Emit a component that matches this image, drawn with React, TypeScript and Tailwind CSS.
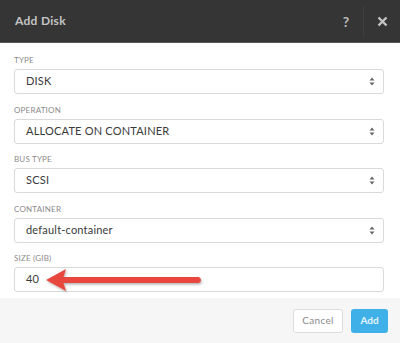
import React from 'react';

const Field: React.FC<{ label: string; value: string; select?: boolean }> = ({ label, value, select = true }) => (
  <div className="flex flex-col">
    <span className="text-[8px] leading-[10px] tracking-wide text-[#8a8a8a] uppercase mb-[4px]">{label}</span>
    <div className="h-[25px] border border-[#d9d9d9] rounded-[3px] bg-white flex items-center justify-between pl-[11px] pr-[8px]">
      <span className="text-[11px] text-[#3a3a3a] tracking-[0.2px]">{value}</span>
      {select && (
        <svg width="6" height="9" viewBox="0 0 6 9" className="text-[#666]">
          <path d="M3 0.5 L5.5 3.5 H0.5 Z" fill="currentColor" />
          <path d="M3 8.5 L5.5 5.5 H0.5 Z" fill="currentColor" />
        </svg>
      )}
    </div>
  </div>
);

const App: React.FC = () => {
  return (
    <div className="w-[400px] h-[343px] bg-white flex flex-col relative overflow-hidden" style={{ fontFamily: 'Lato, "Open Sans", "Liberation Sans", sans-serif' }}>
      {/* Header */}
      <div className="h-[43px] bg-[#353535] border-b border-[#555] flex items-center pl-[15px]">
        <span className="text-[12px] font-bold text-[#c4c4c4] tracking-[0.3px]">Add Disk</span>
        <div className="ml-auto flex items-center h-full">
          <span className="w-[34px] text-center text-[14px] font-bold text-[#bdbdbd]">?</span>
          <div className="w-px h-[30px] bg-[#3f3f3f]" />
          <div className="w-[36px] flex justify-center">
            <svg width="11" height="11" viewBox="0 0 11 11">
              <path d="M1.5 1.5 L9.5 9.5 M9.5 1.5 L1.5 9.5" stroke="#c4c4c4" strokeWidth="2.4" />
            </svg>
          </div>
        </div>
      </div>

      {/* Body */}
      <div className="flex flex-col gap-[10.5px] pl-[14px] pr-[16px] pt-[12px]">
        <Field label="Type" value="DISK" />
        <Field label="Operation" value="ALLOCATE ON CONTAINER" />
        <Field label="Bus Type" value="SCSI" />
        <Field label="Container" value="default-container" />
        <div className="relative">
          <Field label="Size (GiB)" value="40" select={false} />
          <svg className="absolute left-[30px] top-[13px]" width="162" height="28" viewBox="0 0 162 28">
            <defs>
              <filter id="sh" x="-10%" y="-50%" width="120%" height="200%">
                <feDropShadow dx="1" dy="1.5" stdDeviation="1" floodColor="#000" floodOpacity="0.3" />
              </filter>
            </defs>
            <path d="M2 14 L22 3 L19.5 11 L155 11 Q159 14 155 17 L19.5 17 L22 25 Z" fill="#e8473d" filter="url(#sh)" />
          </svg>
        </div>
      </div>

      {/* Footer */}
      <div className="mt-auto h-[45px] bg-[#f6f6f6] flex items-center justify-end gap-[8px] pr-[12px]">
        <button className="w-[50px] h-[24px] border border-[#dcdcdc] bg-white rounded-[3px] text-[10px] text-[#8a8a8a] tracking-[0.3px]">Cancel</button>
        <button className="w-[37px] h-[24px] bg-[#3fb1e8] rounded-[3px] text-[10px] font-bold text-[#e6f5fd]">Add</button>
      </div>
    </div>
  );
};

export default App;
